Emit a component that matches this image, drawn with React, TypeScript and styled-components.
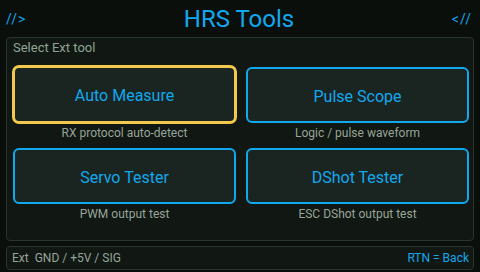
import React from 'react';
import styled, { createGlobalStyle } from 'styled-components';

interface ITool {
  name: string;
  desc: string;
}

interface IToolButtonProps {
  selected?: boolean;
}

const tools: ITool[] = [
  { name: 'Auto Measure', desc: 'RX protocol auto-detect' },
  { name: 'Pulse Scope', desc: 'Logic / pulse waveform' },
  { name: 'Servo Tester', desc: 'PWM output test' },
  { name: 'DShot Tester', desc: 'ESC DShot output test' },
];

function App(): JSX.Element {
  const selectedIndex = 0;
  return (
    <>
      <GlobalStyle />
      <Screen>
        <Header>
          <Marker>{'//>'}</Marker>
          <Title>HRS Tools</Title>
          <Marker>{'<//'}</Marker>
        </Header>
        <Panel>
          <PanelLabel>Select Ext tool</PanelLabel>
          <ToolGrid>
            {tools.map((tool, i) => (
              <ToolCell key={tool.name}>
                <ToolButton selected={i === selectedIndex}>{tool.name}</ToolButton>
                <ToolDesc>{tool.desc}</ToolDesc>
              </ToolCell>
            ))}
          </ToolGrid>
        </Panel>
        <Footer>
          <FooterInfo>Ext&nbsp;&nbsp;GND / +5V / SIG</FooterInfo>
          <FooterHint>RTN = Back</FooterHint>
        </Footer>
      </Screen>
    </>
  );
}

export default App;

const GlobalStyle = createGlobalStyle`
  html, body {
    margin: 0;
    padding: 0;
    background: #0a0f0b;
  }
  body {
    font-family: Roboto, "Liberation Sans", sans-serif;
  }
`;

const Screen = styled.div`
  width: 480px;
  height: 272px;
  background: #0a0f0b;
  display: flex;
  flex-direction: column;
  overflow: hidden;
`;

const Header = styled.div`
  height: 37px;
  display: flex;
  align-items: center;
  justify-content: space-between;
  padding: 0 8px 0 6px;
  box-sizing: border-box;
`;

const Marker = styled.span`
  color: #12a6ea;
  font-size: 14px;
  letter-spacing: 1px;
  width: 28px;
  &:last-child {
    text-align: right;
  }
`;

const Title = styled.h1`
  margin: 0;
  color: #12a8ee;
  font-size: 24px;
  font-weight: 400;
  line-height: 30px;
`;

const Panel = styled.div`
  margin-left: 6px;
  width: 468px;
  height: 204px;
  box-sizing: border-box;
  background: #111713;
  border: 1px solid #2a352d;
  border-radius: 4px;
  padding: 2px 4px 0 6px;
`;

const PanelLabel = styled.div`
  color: #8fa394;
  font-size: 13px;
  line-height: 16px;
  margin-bottom: 11px;
`;

const ToolGrid = styled.div`
  display: grid;
  grid-template-columns: 223px 223px;
  column-gap: 10px;
  row-gap: 6px;
`;

const ToolCell = styled.div`
  display: flex;
  flex-direction: column;
  align-items: center;
`;

const ToolButton = styled.div<IToolButtonProps>`
  width: 223px;
  height: 56px;
  box-sizing: border-box;
  display: flex;
  align-items: center;
  justify-content: center;
  padding-top: 2px;
  background: #1a2521;
  border: 2px solid #12a8ee;
  border-radius: 6px;
  color: #12a8ee;
  font-size: 16px;
  ${(props) =>
    props.selected &&
    `
    border: 3px solid #f2c94c;
    width: 225px;
    height: 59px;
    margin: -2px -1px -1px;
    border-radius: 7px;
  `}
`;

const ToolDesc = styled.div`
  color: #95a598;
  font-size: 12px;
  line-height: 18px;
  padding-top: 1px;
`;

const Footer = styled.div`
  margin: 5px 0 0 6px;
  width: 468px;
  height: 24px;
  box-sizing: border-box;
  background: #111713;
  border: 1px solid #2a352d;
  border-radius: 4px;
  padding: 0 4px 0 5px;
  display: flex;
  align-items: center;
  justify-content: space-between;
  font-size: 12px;
`;

const FooterInfo = styled.span`
  color: #95a598;
  white-space: pre;
`;

const FooterHint = styled.span`
  color: #12a8ee;
`;
